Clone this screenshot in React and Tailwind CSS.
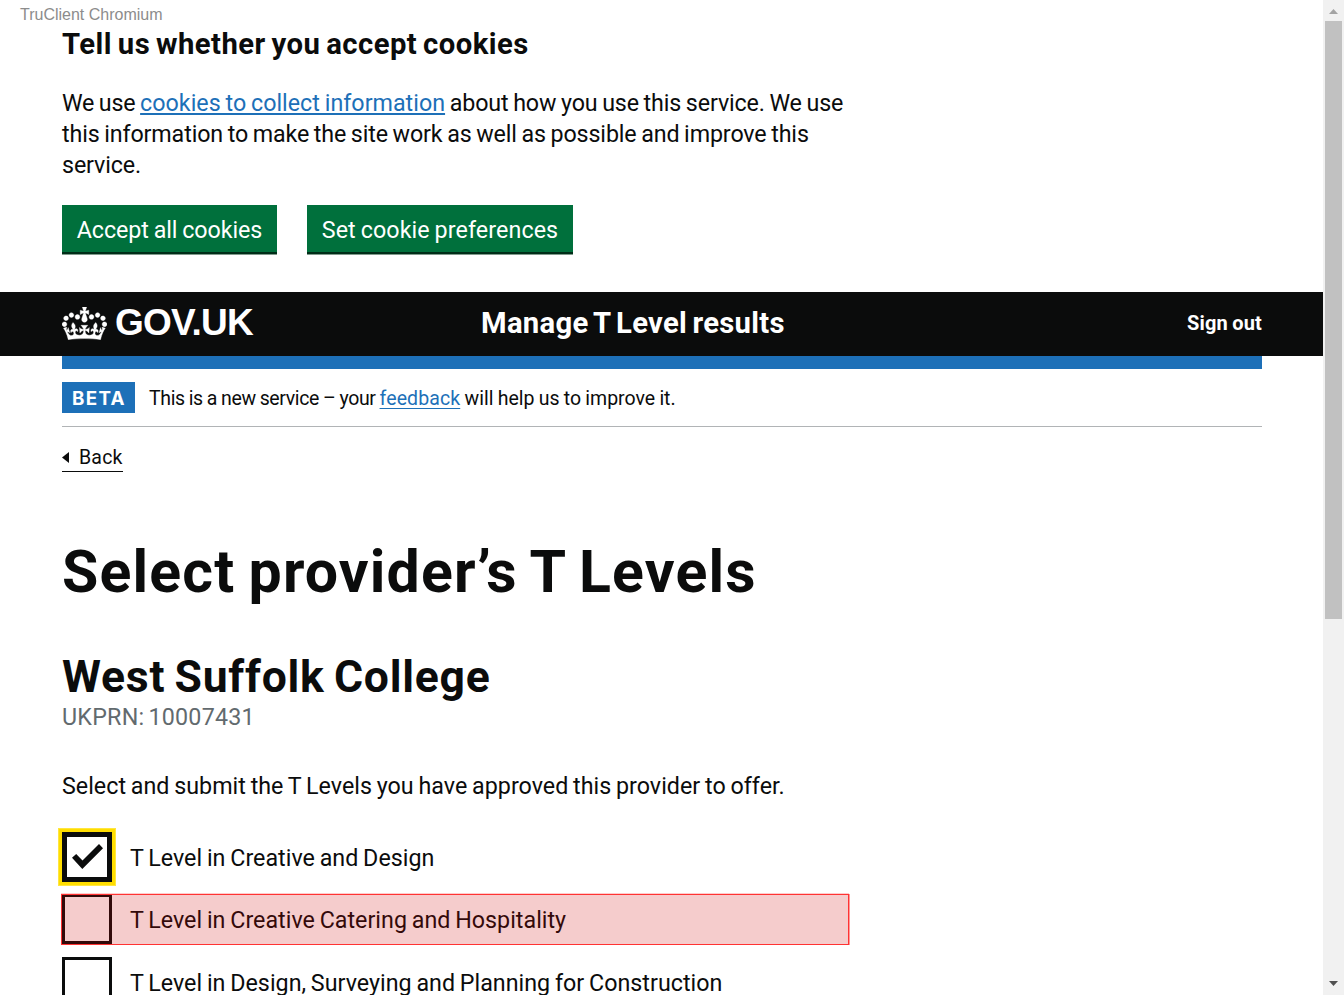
import React from 'react';

function Crown() {
  return (
    <svg className="h-[33px] w-[45px] shrink-0" viewBox="0 0 132 97" fill="#fff" aria-hidden="true">
      <path
        fillRule="evenodd"
        stroke="#fff"
        strokeWidth="1"
        d="M25 30.2c3.5 1.5 7.7-.2 9.1-3.7 1.5-3.6-.2-7.8-3.9-9.2-3.6-1.4-7.6.3-9.1 3.9-1.4 3.5.3 7.5 3.9 9zM9 39.5c3.6 1.5 7.8-.2 9.2-3.7 1.5-3.6-.2-7.8-3.9-9.1-3.6-1.5-7.6.2-9.1 3.8-1.4 3.5.3 7.5 3.8 9zM4.4 57.2c3.5 1.5 7.7-.2 9.1-3.8 1.5-3.6-.2-7.7-3.9-9.1-3.5-1.5-7.6.3-9.1 3.8-1.4 3.5.3 7.6 3.9 9.1zm38.3-21.4c3.5 1.5 7.7-.2 9.1-3.8 1.5-3.6-.2-7.7-3.9-9.1-3.6-1.5-7.6.3-9.1 3.8-1.3 3.6.4 7.7 3.9 9.1zm64.4-5.6c-3.6 1.5-7.8-.2-9.1-3.7-1.5-3.6.2-7.8 3.8-9.2 3.6-1.4 7.7.3 9.2 3.9 1.3 3.5-.4 7.5-3.9 9zm15.9 9.3c-3.6 1.5-7.7-.2-9.1-3.7-1.5-3.6.2-7.8 3.7-9.1 3.6-1.5 7.7.2 9.2 3.8 1.5 3.5-.3 7.5-3.8 9zm4.7 17.7c-3.6 1.5-7.8-.2-9.2-3.8-1.5-3.6.2-7.7 3.9-9.1 3.6-1.5 7.7.3 9.2 3.8 1.3 3.5-.4 7.6-3.9 9.1zM89.3 35.8c-3.6 1.5-7.8-.2-9.2-3.8-1.4-3.6.2-7.7 3.9-9.1 3.6-1.5 7.7.3 9.2 3.8 1.4 3.6-.3 7.7-3.9 9.1zM69.7 17.7l8.9 4.7V9.3l-8.9 2.8c-.2-.3-.5-.6-.9-.9L72.4 0H59.6l3.5 11.2c-.3.3-.6.5-.9.9l-8.8-2.8v13.1l8.8-4.7c.3.3.6.7.9.9l-5 15.4v.1c-.2.8-.4 1.6-.4 2.4 0 4.1 3.1 7.5 7 8.1h.2c.3 0 .7.1 1 .1.4 0 .7 0 1-.1h.2c4-.6 7.1-4.1 7.1-8.1 0-.8-.1-1.7-.4-2.4V34l-5.1-15.4c.4-.2.7-.6 1-.9zM66 92.8c16.9 0 32.8 1.1 47.1 3.2 4-16.9 8.9-26.7 14-33.5l-9.6-3.4c1 4.9 1.1 7.2 0 10.2-1.5-1.4-3-4.3-4.2-8.7L108.6 76c2.8-2 5-3.2 7.5-3.3-4.4 9.4-10 11.9-13.6 11.2-4.3-.8-6.3-4.6-5.6-7.9 1-4.7 5.7-5.9 8-.5 4.3-8.7-3-11.4-7.6-8.8 7.1-7.2 7.9-13.5 2.1-21.1-8 6.1-8.1 12.3-4.5 20.8-4.7-5.4-12.1-2.5-9.5 6.2 3.4-5.2 7.9-2 7.2 3.1-.6 4.3-6.4 7.8-13.5 7.2-10.3-.9-10.9-8-11.2-13.8 2.5-.5 7.1 1.8 11 7.3L80.2 60c-4.1 4.4-8 5.3-12.3 5.4 1.4-4.4 8-11.6 8-11.6H55.5s6.4 7.2 7.9 11.6c-4.2-.1-8-1-12.3-5.4l1.4 16.4c3.9-5.5 8.5-7.7 10.9-7.3-.3 5.8-.9 12.8-11.1 13.8-7.2.6-12.9-2.9-13.5-7.2-.7-5 3.8-8.3 7.1-3.1 2.7-8.7-4.6-11.6-9.4-6.2 3.7-8.5 3.6-14.7-4.6-20.8-5.8 7.6-5 13.9 2.2 21.1-4.7-2.6-11.9.1-7.7 8.8 2.3-5.5 7.1-4.2 8.1.5.7 3.3-1.3 7.1-5.7 7.9-3.5.7-9-1.8-13.5-11.2 2.5.1 4.7 1.3 7.5 3.3l-4.7-15.4c-1.2 4.4-2.7 7.2-4.3 8.7-1.1-3-.9-5.3 0-10.2l-9.5 3.4c5 6.9 9.9 16.7 14 33.5 14.8-2.1 30.8-3.2 47.7-3.2z"
      />
    </svg>
  );
}

function Button({ children, className }) {
  return (
    <button
      className={`flex h-[47px] items-center justify-center bg-[#00703c] pt-[3px] text-[23.25px] [word-spacing:-1px] whitespace-nowrap text-white shadow-[0_2px_0_#002d18,0_3px_0_#809a8c] ${className}`}
    >
      {children}
    </button>
  );
}

function CookieBanner() {
  return (
    <section className="h-[292px] pt-[26px] pl-[62px]">
      <h2 className="text-[29.25px] leading-[36px] font-bold tracking-[0.45px] [word-spacing:-1.8px]">
        Tell us whether you accept cookies
      </h2>
      <p className="mt-[26px] w-[800px] text-[23.25px] leading-[31px] [word-spacing:-1px]">
        <span className="block whitespace-nowrap">
          <span className="tracking-[-0.17px]">We use </span>
          <a className="tracking-[0.02px] text-[#1d70b8] underline decoration-2 underline-offset-2">
            cookies to collect information
          </a>
          <span className="tracking-[-0.12px]"> about how you use this service. We use</span>
        </span>
        <span className="block tracking-[-0.12px] whitespace-nowrap">
          this information to make the site work as well as possible and improve this
        </span>
        <span className="block tracking-[-0.12px]">service.</span>
      </p>
      <div className="mt-6 flex gap-[30px]">
        <Button className="w-[215px] tracking-[-0.05px]">Accept all cookies</Button>
        <Button className="w-[266px] tracking-[0.1px]">Set cookie preferences</Button>
      </div>
    </section>
  );
}

function Header() {
  return (
    <header className="h-16 bg-[#0b0c0c] px-[62px] text-white">
      <div className="flex h-[62px] w-[1200px] items-center">
        <div className="flex w-[419px] items-center gap-2">
          <Crown />
          <span className="font-['Liberation_Sans',sans-serif] text-[37px] leading-[60px] font-bold tracking-[-0.75px]">
            GOV.UK
          </span>
        </div>
        <span className="grow text-[29.25px] leading-[60px] font-bold tracking-[0.28px] [word-spacing:-2.2px] whitespace-nowrap">
          Manage T Level results
        </span>
        <a className="text-[20px] font-bold tracking-[0.2px] [word-spacing:-1px] whitespace-nowrap">Sign out</a>
      </div>
    </header>
  );
}

function PhaseBanner() {
  return (
    <div className="flex h-[58px] w-[1200px] items-center gap-[14px] border-b border-[#b1b4b6]">
      <strong className="flex h-[31px] w-[73px] items-center justify-center bg-[#1d70b8] pt-[3px] pl-px font-['Inter',sans-serif] text-[18.75px] font-bold tracking-[1.3px] text-white">
        BETA
      </strong>
      <span className="pt-[3px] text-[19.5px] [word-spacing:-0.5px] whitespace-nowrap">
        <span className="tracking-[-0.36px]">This is a new service – your </span>
        <a className="tracking-[0.1px] text-[#1d70b8] underline decoration-1 underline-offset-[3px]">feedback</a>
        <span className="tracking-[-0.02px]"> will help us to improve it.</span>
      </span>
    </div>
  );
}

function Checkbox({ label, checked, highlighted, className = '' }) {
  return (
    <label className={`relative flex h-[50px] w-[788px] items-center gap-[18px] ${className}`}>
      {checked ? (
        <span className="size-[50px] shrink-0 border-[5px] border-[#0b0c0c] shadow-[0_0_0_3px_#ffdd00,0_0_0_4px_#ffe640]">
          <svg className="size-10" viewBox="5 5 40 40" fill="#0b0c0c" aria-hidden="true">
            <path d="M10 25.8 14.2 22l6.3 6.4L37 12l4 4.2L20.3 37z" />
          </svg>
        </span>
      ) : (
        <span className="size-[50px] shrink-0 border-[3px] border-[#0b0c0c]" />
      )}
      <span className="pt-[3px] text-[23.25px] tracking-[0.02px] [word-spacing:-1px] whitespace-nowrap">{label}</span>
      {highlighted && (
        <span className="absolute top-0 -left-px h-[51px] w-[788px] border border-[#ff3333] bg-[#cc0000]/20 shadow-[0_-1px_0_#ffcccc,1px_0_0_#ff9999]" />
      )}
    </label>
  );
}

function Scrollbar() {
  return (
    <div className="flex h-full w-[21px] shrink-0 flex-col items-center bg-[#f1f1f1]">
      <svg className="h-[21px] w-[9px] shrink-0" viewBox="0 0 9 21" fill="#a3a3a3">
        <path d="M0 14 4.5 9 9 14z" />
      </svg>
      <div className="h-[598px] w-[17px] bg-[#c1c1c1]" />
      <div className="grow" />
      <svg className="h-[21px] w-[9px] shrink-0" viewBox="0 0 9 21" fill="#505050">
        <path d="M0 7h9l-4.5 5z" />
      </svg>
    </div>
  );
}

export default function App() {
  return (
    <div className="relative flex h-[995px] w-[1344px] overflow-hidden bg-white font-['Roboto',sans-serif] text-[#0b0c0c]">
      <div className="h-full w-[1323px] overflow-hidden">
        <CookieBanner />
        <Header />
        <main className="pl-[62px]">
          <div className="h-[13px] w-[1200px] bg-[#1d70b8]" />
          <PhaseBanner />
          <a className="mt-[15px] flex h-[30px] w-[61px] items-center gap-[10px] border-b border-[#0b0c0c] pt-px text-[19.5px] leading-[29px] tracking-[0.2px]">
            <svg className="h-[11px] w-[7px] shrink-0" viewBox="0 0 7 11" fill="#0b0c0c">
              <path d="M7 0v11L0 5.5z" />
            </svg>
            Back
          </a>
          <h1 className="mt-[65px] text-[59px] leading-[70px] font-bold tracking-[1.15px] [word-spacing:-2.5px]">
            Select provider’s T Levels
          </h1>
          <h2 className="mt-[45px] text-[44.5px] leading-[50px] font-bold tracking-[0.75px] [word-spacing:-2.5px]">
            West Suffolk College
          </h2>
          <p className="text-[23.25px] leading-[31px] tracking-[0.25px] [word-spacing:-2px] text-[#626a6e]">
            UKPRN: 10007431
          </p>
          <p className="mt-[38px] text-[23.25px] leading-[31px] tracking-[0.02px] [word-spacing:-1px]">
            Select and submit the T Levels you have approved this provider to offer.
          </p>
          <div className="mt-[30px]">
            <Checkbox label="T Level in Creative and Design" checked />
            <Checkbox className="mt-3" label="T Level in Creative Catering and Hospitality" highlighted />
            <Checkbox className="mt-[13px]" label="T Level in Design, Surveying and Planning for Construction" />
          </div>
        </main>
      </div>
      <Scrollbar />
      <span className="absolute top-[5px] left-5 font-['Liberation_Sans',sans-serif] text-base leading-[19px] text-[#8c8c8c]">
        TruClient Chromium
      </span>
    </div>
  );
}
